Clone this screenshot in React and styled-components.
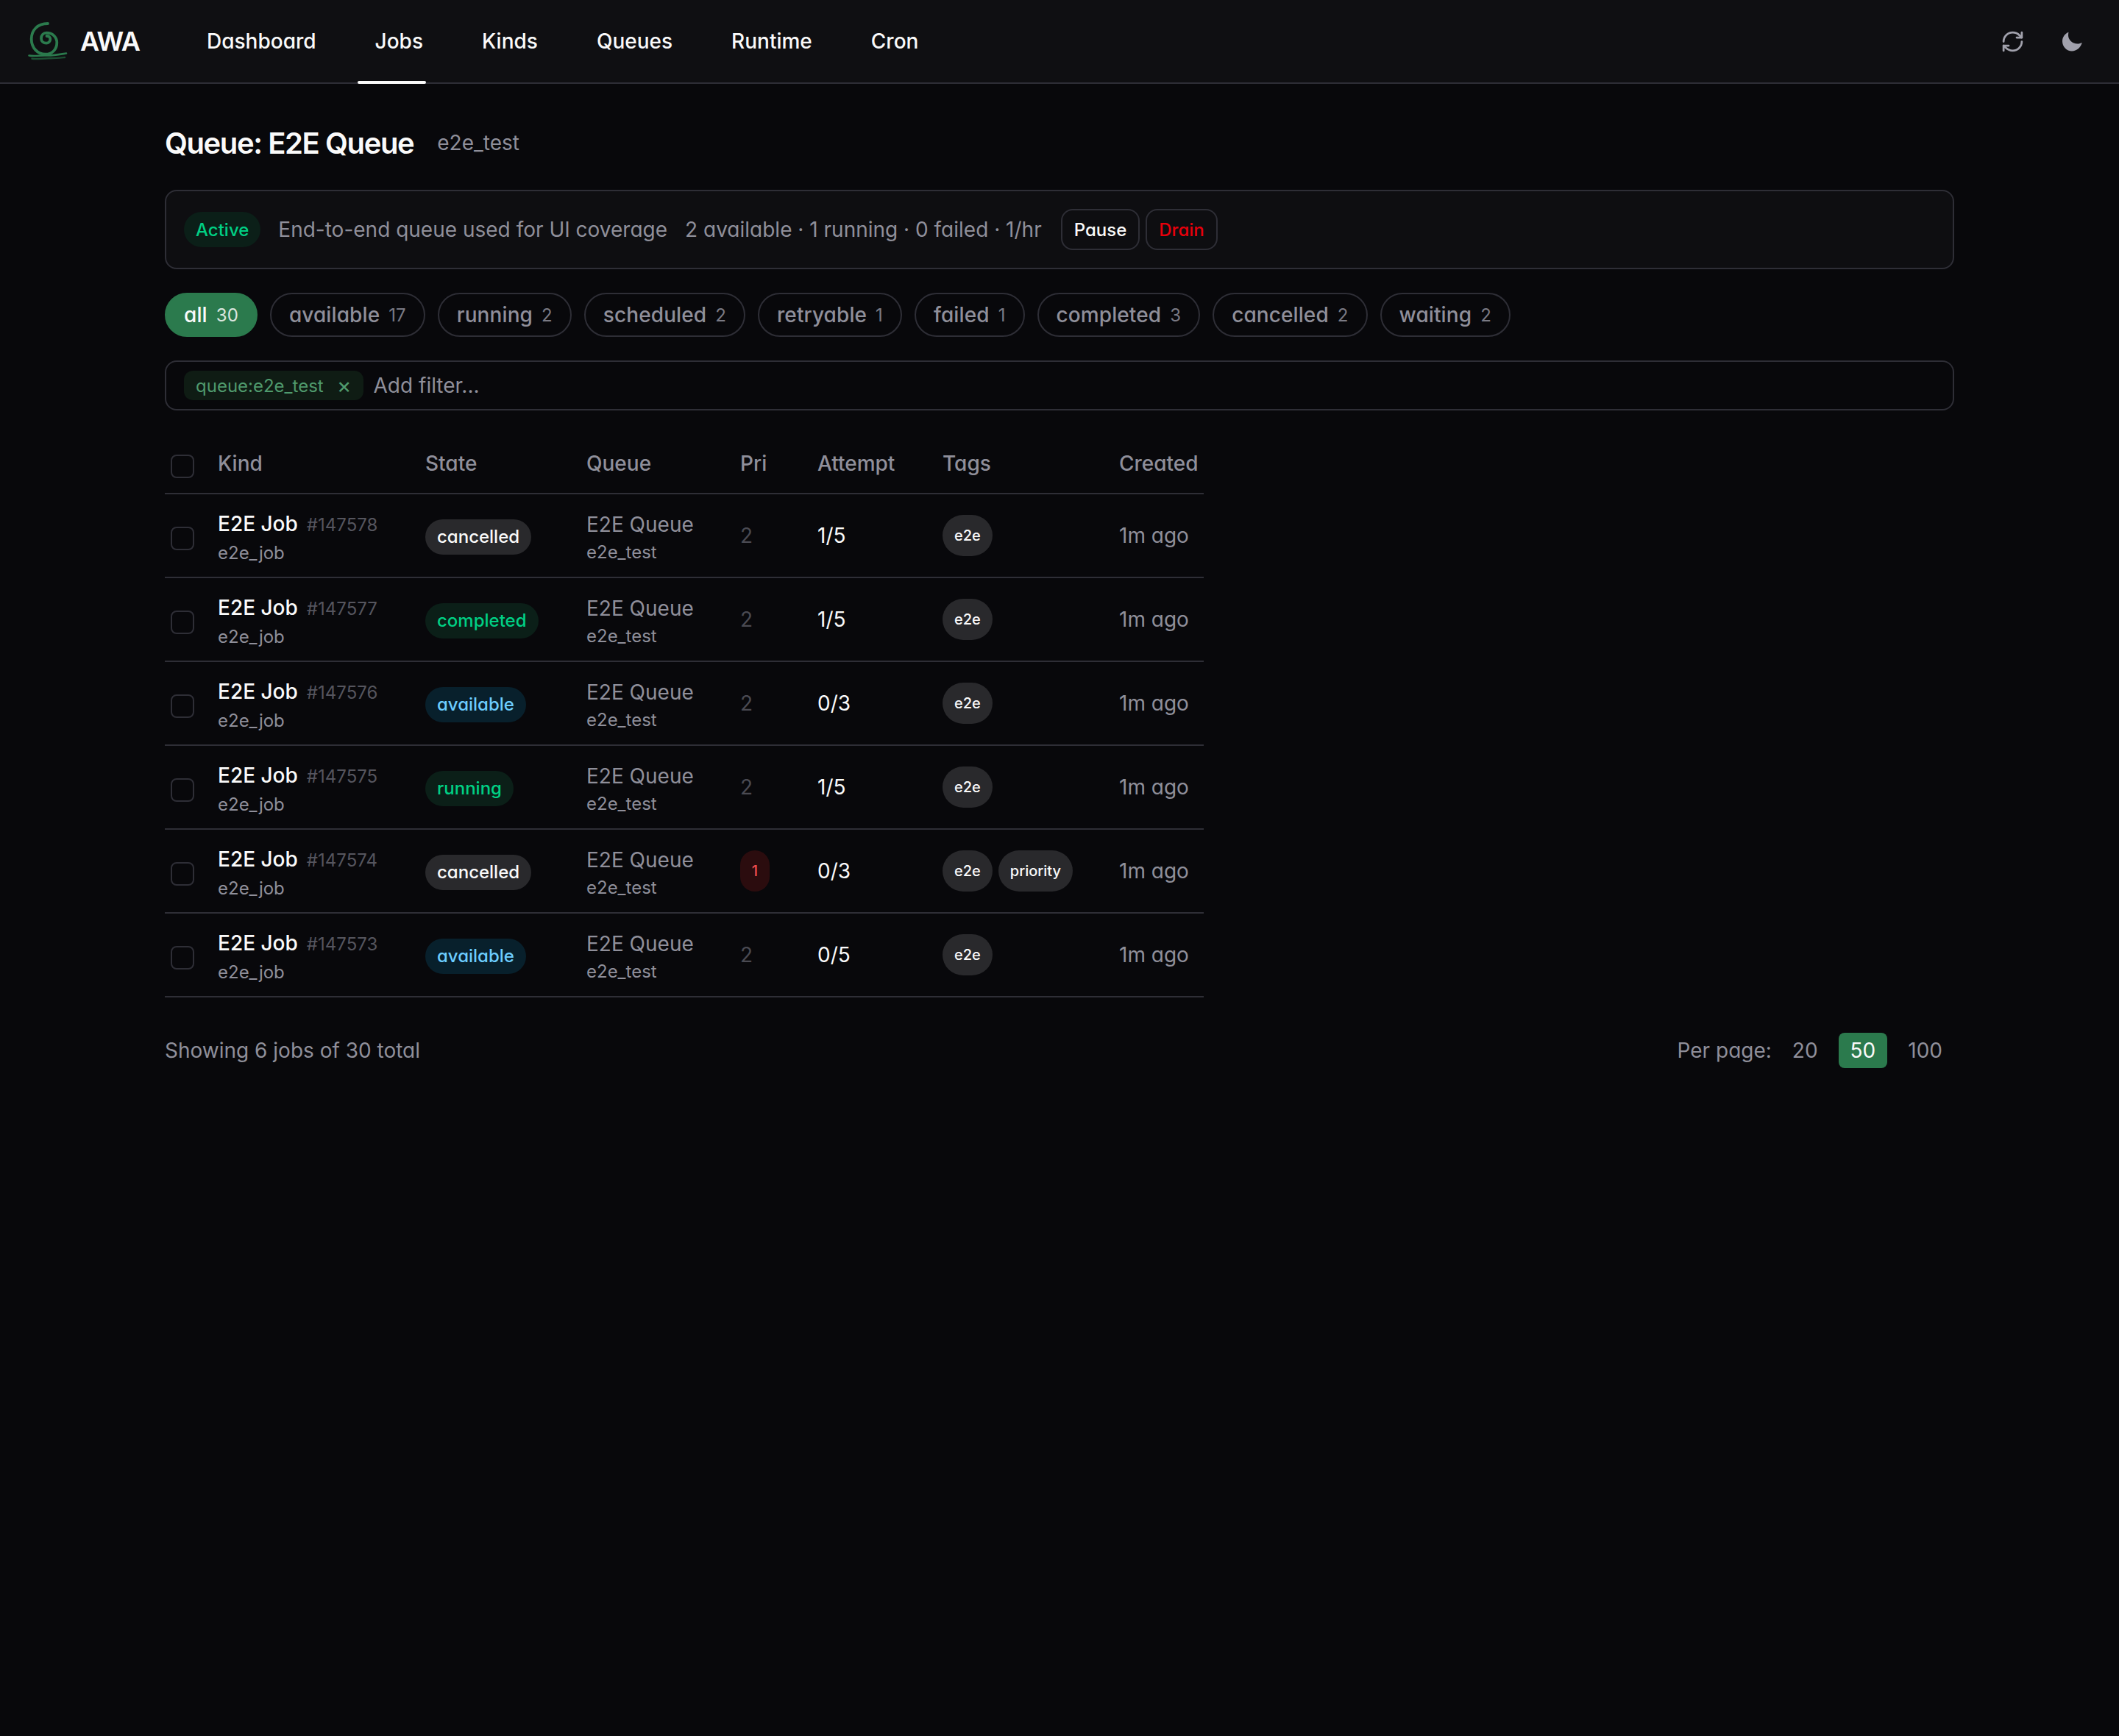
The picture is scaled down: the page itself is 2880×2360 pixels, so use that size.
import React from "react";
import styled, { createGlobalStyle } from "styled-components";
import { RefreshCw } from "lucide-react";

const GlobalStyle = createGlobalStyle`
  html, body {
    margin: 0;
    padding: 0;
    background: #08080b;
  }
  body {
    min-height: 2360px;
    font-family: Inter, "Noto Sans", sans-serif;
    font-feature-settings: "cv11" 1;
    color: #fafafa;
  }
  * { box-sizing: border-box; }
`;

const JOBS = [
  { id: 147578, state: "cancelled", pri: 2, attempt: "1/5", tags: ["e2e"] },
  { id: 147577, state: "completed", pri: 2, attempt: "1/5", tags: ["e2e"] },
  { id: 147576, state: "available", pri: 2, attempt: "0/3", tags: ["e2e"] },
  { id: 147575, state: "running", pri: 2, attempt: "1/5", tags: ["e2e"] },
  { id: 147574, state: "cancelled", pri: 1, attempt: "0/3", tags: ["e2e", "priority"] },
  { id: 147573, state: "available", pri: 2, attempt: "0/5", tags: ["e2e"] },
];

const PILLS = [
  ["all", 30],
  ["available", 17],
  ["running", 2],
  ["scheduled", 2],
  ["retryable", 1],
  ["failed", 1],
  ["completed", 3],
  ["cancelled", 2],
  ["waiting", 2],
];

const NAV = ["Dashboard", "Jobs", "Kinds", "Queues", "Runtime", "Cron"];

const Logo = () => (
  <LogoSvg viewBox="0 0 56 56" fill="none" strokeLinecap="round">
    <path
      d="M28 4C14 4 5.7 13 5.7 25C5.7 37 14 45.7 24.7 45.7C34 45.7 40.3 39 40.3 30C40.3 22 34 16.7 26.3 16.7C22 16.7 19 20 19 24.3C19 28 22 30.7 26 30.7C29 30.7 31.3 28 31.3 25C31.3 22.5 29 20.8 26.5 21"
      stroke="#2b7a4d"
      strokeWidth="3.8"
    />
    <path d="M2.5 47.5C10 49 18 47 26 47.5C34 48 44 46 53 44.5" stroke="#2b7a4d" strokeWidth="2.6" />
    <path d="M6.5 51.8C14 53 22 51 30 51.2C38 51.4 45 50.6 51 50" stroke="#1c4f33" strokeWidth="2.4" />
  </LogoSvg>
);

const MoonIcon = () => (
  <svg width="27" height="27" viewBox="0 0 27 27" fill="currentColor">
    <path d="M8.5 0.7C3.5 2.5 0 7.5 0 13C0 20.2 5.8 26.5 13 26.5C19.5 26.5 25 21.5 26.8 15C25 15.8 23 16.5 20.5 16.5C13.5 16.5 8 11 8 5C8 3.5 8.2 2 8.5 0.7Z" />
  </svg>
);

const App = () => {
  return (
    <>
      <GlobalStyle />
      <Header>
        <Brand>
          <Logo />
          <BrandName>AWA</BrandName>
        </Brand>
        <Nav>
          {NAV.map((item) => (
            <NavLink key={item} $active={item === "Jobs"}>
              {item}
            </NavLink>
          ))}
        </Nav>
        <HeaderIcons>
          <IconButton>
            <RefreshCw size={33} strokeWidth={2} />
          </IconButton>
          <IconButton>
            <MoonIcon />
          </IconButton>
        </HeaderIcons>
      </Header>

      <Main>
        <TitleRow>
          <Title>Queue: E2E Queue</Title>
          <TitleSub>e2e_test</TitleSub>
        </TitleRow>

        <InfoCard>
          <ActiveBadge>Active</ActiveBadge>
          <InfoText>End-to-end queue used for UI coverage</InfoText>
          <InfoText>2 available · 1 running · 0 failed · 1/hr</InfoText>
          <CardButtons>
            <SmallButton>Pause</SmallButton>
            <SmallButton $danger>Drain</SmallButton>
          </CardButtons>
        </InfoCard>

        <Pills>
          {PILLS.map(([label, count]) => (
            <Pill key={label} $active={label === "all"}>
              {label}
              <PillCount>{count}</PillCount>
            </Pill>
          ))}
        </Pills>

        <FilterBox>
          <FilterChip>
            queue:e2e_test
            <ChipClose>×</ChipClose>
          </FilterChip>
          <FilterInput placeholder="Add filter..." />
        </FilterBox>

        <Table>
          <colgroup>
            <col width="56" />
            <col width="282" />
            <col width="219" />
            <col width="209" />
            <col width="105" />
            <col width="170" />
            <col width="240" />
            <col width="131" />
          </colgroup>
          <thead>
            <tr>
              <Th $check>
                <Checkbox />
              </Th>
              <Th>Kind</Th>
              <Th>State</Th>
              <Th>Queue</Th>
              <Th>Pri</Th>
              <Th>Attempt</Th>
              <Th>Tags</Th>
              <Th>Created</Th>
            </tr>
          </thead>
          <tbody>
            {JOBS.map((job) => (
              <tr key={job.id}>
                <Td $check>
                  <Checkbox />
                </Td>
                <Td>
                  <Stacked>
                    <JobName>
                      E2E Job<JobId>#{job.id}</JobId>
                    </JobName>
                    <SubText>e2e_job</SubText>
                  </Stacked>
                </Td>
                <Td>
                  <StateBadge $state={job.state}>{job.state}</StateBadge>
                </Td>
                <Td>
                  <Stacked>
                    <QueueName>E2E Queue</QueueName>
                    <SubText>e2e_test</SubText>
                  </Stacked>
                </Td>
                <Td>
                  {job.pri === 1 ? <PriBadge>1</PriBadge> : <PriPlain>{job.pri}</PriPlain>}
                </Td>
                <Td>
                  <Attempt>{job.attempt}</Attempt>
                </Td>
                <Td>
                  <TagList>
                    {job.tags.map((tag) => (
                      <Tag key={tag}>{tag}</Tag>
                    ))}
                  </TagList>
                </Td>
                <Td>
                  <Created>1m ago</Created>
                </Td>
              </tr>
            ))}
          </tbody>
        </Table>

        <Footer>
          <FooterText>Showing 6 jobs of 30 total</FooterText>
          <PerPage>
            <FooterText>Per page:</FooterText>
            <PageButton>20</PageButton>
            <PageButton $active>50</PageButton>
            <PageButton>100</PageButton>
          </PerPage>
        </Footer>
      </Main>
    </>
  );
};

export default App;

const Header = styled.header`
  display: flex;
  align-items: center;
  height: 114px;
  padding: 0 50px 0 37px;
  background: #0f0f12;
  border-bottom: 2px solid #2e2e36;
`;

const Brand = styled.div`
  display: flex;
  align-items: center;
  gap: 16px;
  width: 244px;
`;

const LogoSvg = styled.svg`
  width: 56px;
  height: 56px;
  flex: none;
`;

const BrandName = styled.span`
  font-size: 36px;
  font-weight: 600;
  letter-spacing: -1.2px;
  color: #fafafa;
`;

const Nav = styled.nav`
  display: flex;
  gap: 80px;
  flex: 1;
`;

const NavLink = styled.a`
  position: relative;
  font-size: 28px;
  font-weight: 500;
  color: #fafafa;

  &::after {
    content: "";
    display: ${(p) => (p.$active ? "block" : "none")};
    position: absolute;
    left: -24px;
    right: -4px;
    bottom: -41px;
    height: 4px;
    border-radius: 2px;
    background: #fafafa;
  }
`;

const HeaderIcons = styled.div`
  display: flex;
  align-items: center;
  gap: 51px;
`;

const IconButton = styled.div`
  display: flex;
  color: #a1a1ac;
`;

const Main = styled.main`
  padding: 52px 224px 0;
`;

const TitleRow = styled.div`
  display: flex;
  align-items: center;
  gap: 32px;
  height: 56px;
  margin-bottom: 36px;
`;

const Title = styled.h1`
  margin: 0;
  font-size: 40px;
  font-weight: 600;
  letter-spacing: -1.4px;
  color: #fafafa;
`;

const TitleSub = styled.span`
  font-size: 28px;
  color: #8f8f9a;
`;

const InfoCard = styled.section`
  display: flex;
  align-items: center;
  gap: 24px;
  height: 108px;
  padding: 0 24px;
  background: #0e0e11;
  border: 2px solid #2e2e36;
  border-radius: 16px;
  margin-bottom: 32px;
`;

const ActiveBadge = styled.span`
  display: flex;
  align-items: center;
  height: 48px;
  padding: 0 16px;
  border-radius: 24px;
  background: #0b1f18;
  color: #00d084;
  font-size: 24px;
  font-weight: 500;
`;

const InfoText = styled.span`
  font-size: 28px;
  color: #8f8f9a;
`;

const CardButtons = styled.div`
  display: flex;
  gap: 8px;
  margin-left: 2px;
`;

const SmallButton = styled.button`
  height: 56px;
  padding: 0 16px;
  background: transparent;
  border: 2px solid #2e2e36;
  border-radius: 16px;
  font-family: inherit;
  font-feature-settings: inherit;
  font-size: 24px;
  font-weight: 500;
  color: ${(p) => (p.$danger ? "#e7000b" : "#fafafa")};
`;

const Pills = styled.div`
  display: flex;
  gap: 17px;
  margin-bottom: 32px;
`;

const Pill = styled.div`
  display: flex;
  align-items: center;
  gap: 12px;
  height: 60px;
  padding: 0 24px;
  border-radius: 30px;
  border: 2px solid ${(p) => (p.$active ? "#2b7a4d" : "#2e2e36")};
  background: ${(p) => (p.$active ? "#2b7a4d" : "transparent")};
  color: ${(p) => (p.$active ? "#fafafa" : "#8f8f9a")};
  font-size: 28px;
  font-weight: 500;
  letter-spacing: 0.1px;
`;

const PillCount = styled.span`
  font-size: 24px;
  font-weight: 400;
  opacity: 0.85;
`;

const FilterBox = styled.div`
  display: flex;
  align-items: center;
  gap: 14px;
  height: 68px;
  padding: 0 24px;
  border: 2px solid #2e2e36;
  border-radius: 16px;
  margin-bottom: 32px;
`;

const FilterChip = styled.span`
  display: flex;
  align-items: center;
  gap: 18px;
  height: 40px;
  padding: 0 16px;
  border-radius: 12px;
  background: #0f1c14;
  color: #4f9a6d;
  font-size: 24px;
  white-space: nowrap;
`;

const ChipClose = styled.span`
  font-size: 30px;
  line-height: 1;
`;

const FilterInput = styled.input`
  flex: 1;
  padding: 0;
  border: 0;
  outline: 0;
  background: transparent;
  font-family: inherit;
  font-feature-settings: inherit;
  font-size: 28px;
  color: #fafafa;

  &::placeholder {
    color: #8f8f9a;
    opacity: 1;
  }
`;

const Table = styled.table`
  width: 1412px;
  table-layout: fixed;
  border-collapse: separate;
  border-spacing: 0;
`;

const Th = styled.th`
  height: 82px;
  padding: ${(p) => (p.$check ? "8px 0 0 8px" : "0 0 0 16px")};
  border-bottom: 2px solid #2e2e36;
  text-align: left;
  font-size: 28px;
  font-weight: 500;
  color: #8f8f9a;
`;

const Td = styled.td`
  height: 114px;
  padding: ${(p) => (p.$check ? "8px 0 0 8px" : "0 0 0 16px")};
  border-bottom: 2px solid #2e2e36;
  vertical-align: middle;
  white-space: nowrap;
`;

const Checkbox = styled.span`
  display: block;
  width: 32px;
  height: 32px;
  border: 2px solid #2e2e36;
  border-radius: 8px;
`;

const Stacked = styled.div`
  padding-top: 6px;
`;

const JobName = styled.div`
  display: flex;
  align-items: baseline;
  gap: 12px;
  font-size: 28px;
  font-weight: 500;
  line-height: 40px;
  color: #fafafa;
`;

const JobId = styled.span`
  font-size: 24px;
  font-weight: 400;
  color: #55555e;
`;

const SubText = styled.div`
  font-size: 24px;
  line-height: 36px;
  color: #8f8f9a;
`;

const STATE_COLORS = {
  cancelled: ["#29292c", "#fafafa"],
  completed: ["#0b1f18", "#00d084"],
  running: ["#0b1f18", "#00d084"],
  available: ["#08202c", "#6ccdff"],
};

const StateBadge = styled.span`
  display: flex;
  width: fit-content;
  align-items: center;
  height: 48px;
  margin-top: 4px;
  padding: 0 16px 2px;
  border-radius: 24px;
  font-size: 24px;
  font-weight: 500;
  background: ${(p) => STATE_COLORS[p.$state][0]};
  color: ${(p) => STATE_COLORS[p.$state][1]};
`;

const QueueName = styled.div`
  font-size: 28px;
  line-height: 40px;
  color: #8f8f9a;
`;

const PriPlain = styled.span`
  font-size: 28px;
  color: #4a4a52;
`;

const PriBadge = styled.span`
  display: inline-flex;
  align-items: center;
  justify-content: center;
  width: 40px;
  height: 56px;
  border-radius: 20px;
  background: #2b0c0e;
  color: #ef4d4d;
  font-size: 20px;
  font-weight: 500;
`;

const Attempt = styled.span`
  font-size: 28px;
  color: #fafafa;
`;

const TagList = styled.div`
  display: flex;
  gap: 8px;
`;

const Tag = styled.span`
  display: flex;
  align-items: center;
  height: 56px;
  padding: 0 16px;
  border-radius: 28px;
  background: #29292c;
  color: #fafafa;
  font-size: 20px;
  font-weight: 500;
`;

const Created = styled.span`
  font-size: 28px;
  color: #8f8f9a;
`;

const Footer = styled.div`
  display: flex;
  align-items: center;
  justify-content: space-between;
  margin-top: 48px;
`;

const FooterText = styled.span`
  font-size: 28px;
  color: #8f8f9a;
`;

const PerPage = styled.div`
  display: flex;
  align-items: center;
  gap: 12px;
`;

const PageButton = styled.span`
  display: flex;
  align-items: center;
  height: 48px;
  padding: 0 16px;
  border-radius: 8px;
  background: ${(p) => (p.$active ? "#2b7a4d" : "transparent")};
  color: ${(p) => (p.$active ? "#fafafa" : "#8f8f9a")};
  font-size: 28px;
`;
